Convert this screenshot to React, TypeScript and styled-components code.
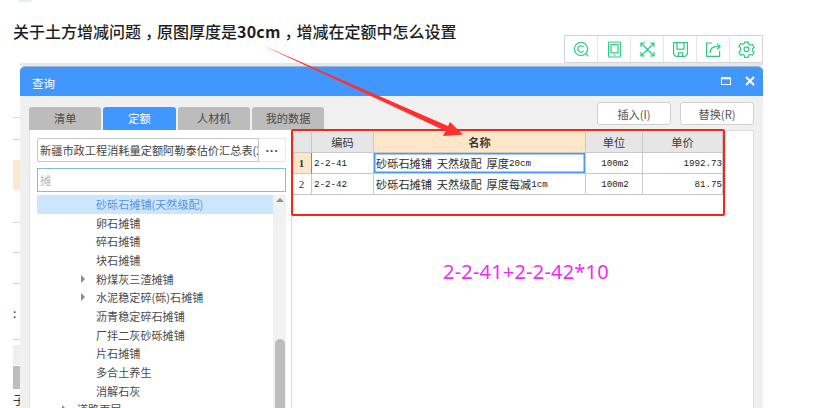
import React from "react";
import styled, { createGlobalStyle } from "styled-components";

const CJK = `"Noto Sans CJK SC", "Noto Sans", sans-serif`;

const Global = createGlobalStyle`
  html, body { margin: 0; padding: 0; background: #fff; }
  * { box-sizing: border-box; }
`;

const Page = styled.div`
  position: relative;
  width: 839px;
  height: 408px;
  overflow: hidden;
  background: #fff;
  font-family: ${CJK};
  color: #444;
`;

const TopArc = styled.div`
  width: 14px;
  height: 2px;
  margin-left: 18px;
  background: #e4eefa;
  border-radius: 0 0 7px 7px;
`;

const Heading = styled.h1`
  margin: 0;
  height: 33px;
  padding: 17px 0 0 13px;
  font-size: 16px;
  line-height: 24px;
  font-weight: 500;
  color: #1e1e1e;
  white-space: nowrap;
`;

const Comma = styled.span`
  display: inline-block;
  width: 16px;
  text-indent: 4px;
`;

const HeadingLatin = styled.span`
  letter-spacing: 0.2px;
  font-weight: 700;
`;

const ActionBar = styled.div`
  display: flex;
  width: 199px;
  height: 28px;
  margin-left: 564px;
  border: 1px solid #d4d4d4;
  background: #fff;
`;

const ActionCell = styled.div`
  flex: 1;
  display: flex;
  align-items: center;
  justify-content: center;
  color: #2fca83;
  & + & { border-left: 1px solid #e6e6e6; }
`;

const PaleStrip = styled.div`
  width: 743px;
  height: 3px;
  margin-left: 20px;
  background: #dce9f6;
`;

const Workspace = styled.div`
  display: flex;
  height: 342px;
`;

const Gutter = styled.div`
  width: 20px;
  padding-left: 13px;
  display: flex;
  flex-direction: column;
  overflow: hidden;
`;

const GutterLine = styled.div<{ $gap: number }>`
  height: 1px;
  margin-top: ${(p) => p.$gap}px;
  background: #d6d6d6;
  flex: none;
`;

const GutterBlock = styled.div<{ $gap: number; $h: number; $bg: string }>`
  height: ${(p) => p.$h}px;
  margin-top: ${(p) => p.$gap}px;
  background: ${(p) => p.$bg};
  flex: none;
`;

const GutterText = styled.div<{ $gap: number }>`
  margin-top: ${(p) => p.$gap}px;
  font-size: 12px;
  line-height: 16px;
  height: 16px;
  color: #333;
  flex: none;
  white-space: nowrap;
`;

const Dialog = styled.section`
  width: 743px;
  height: 342px;
  display: flex;
  flex-direction: column;
  background: #f0f0f0;
  border-radius: 5px 5px 0 0;
  border-top: 1px solid #a9b4bf;
  overflow: hidden;
`;

const TitleBar = styled.header`
  flex: none;
  height: 29px;
  display: flex;
  align-items: center;
  justify-content: space-between;
  padding: 0 8px 2px 12px;
  background: #4297fe;
  color: #fff;
  font-size: 11.5px;
`;

const TitleText = styled.span`
  padding-top: 4px;
`;

const WindowButtons = styled.div`
  display: flex;
  align-items: center;
  gap: 14px;
`;

const NavRow = styled.div`
  flex: none;
  height: 34px;
  display: flex;
  justify-content: space-between;
  padding: 0 9px;
`;

const Tabs = styled.div`
  display: flex;
  align-items: flex-end;
  gap: 2px;
`;

const Tab = styled.div<{ $active?: boolean }>`
  width: 72.3px;
  height: 23px;
  display: flex;
  align-items: center;
  justify-content: center;
  padding-bottom: 2px;
  border-radius: 3px 3px 0 0;
  font-size: 11.2px;
  background: ${(p) => (p.$active ? "#4297fe" : "#bcbcbc")};
  color: ${(p) => (p.$active ? "#fff" : "#4a4a4a")};
`;

const Buttons = styled.div`
  display: flex;
  gap: 9px;
  padding-top: 6px;
`;

const Button = styled.button`
  width: 74px;
  height: 23px;
  padding: 0;
  background: #fff;
  border: 1px solid #d0d0d0;
  border-radius: 3px;
  font-family: ${CJK};
  font-size: 11.2px;
  color: #555;
`;

const Content = styled.div`
  flex: 1;
  min-height: 0;
  display: flex;
  padding: 0 9px;
`;

const LeftPanel = styled.div`
  width: 262px;
  flex: none;
  background: #fff;
  padding: 8px 4px 0 7px;
  border-left: 1px solid #e2e2e2;
  overflow: hidden;
`;

const Picker = styled.div`
  display: flex;
  width: 249px;
  height: 24px;
`;

const PickerValue = styled.div`
  width: 222px;
  flex: none;
  border: 1px solid #c6c6c6;
  border-radius: 2px 0 0 2px;
  font-size: 11.2px;
  line-height: 22px;
  padding-left: 2px;
  color: #444;
  overflow: hidden;
  white-space: nowrap;
`;

const PickerMore = styled.div`
  flex: 1;
  display: flex;
  align-items: center;
  justify-content: center;
  border: 1px solid #e8e8e8;
  border-left: 0;
  font-family: "Liberation Sans", sans-serif;
  font-size: 13px;
  font-weight: 700;
  color: #555;
`;

const Search = styled.div`
  width: 249px;
  height: 24px;
  margin-top: 6px;
  border: 1px solid #85b9f6;
  font-size: 11.2px;
  line-height: 22px;
  padding-left: 2px;
  color: #b5b5b5;
`;

const ListArea = styled.div`
  display: flex;
  width: 249px;
  margin-top: 3px;
  height: 220px;
`;

const Tree = styled.ul`
  width: 236px;
  flex: none;
  margin: 0;
  padding: 0;
  list-style: none;
  overflow: hidden;
`;

const TreeRow = styled.li<{ $indent: number; $selected?: boolean }>`
  position: relative;
  height: 18.67px;
  line-height: 18.67px;
  padding-left: ${(p) => p.$indent}px;
  font-size: 11.1px;
  white-space: nowrap;
  background: ${(p) => (p.$selected ? "#cce6fe" : "transparent")};
  color: ${(p) => (p.$selected ? "#5a94e0" : "#4c4c4c")};
`;

const Caret = styled.span`
  position: absolute;
  top: 5px;
  margin-left: -15px;
  width: 0;
  height: 0;
  border-left: 4px solid #8a8a8a;
  border-top: 4px solid transparent;
  border-bottom: 4px solid transparent;
`;

const ScrollTrack = styled.div`
  width: 13px;
  flex: none;
  display: flex;
  flex-direction: column;
  align-items: center;
  justify-content: space-between;
  background: #f1f1f1;
  padding-top: 3px;
`;

const ScrollUp = styled.div`
  width: 0;
  height: 0;
  border-left: 4px solid transparent;
  border-right: 4px solid transparent;
  border-bottom: 4px solid #8f8f8f;
`;

const ScrollThumb = styled.div`
  width: 10px;
  height: 82px;
  margin-bottom: -6px;
  border-radius: 5px;
  background: #bdbdbd;
`;

const RightPanel = styled.div`
  flex: 1;
  background: #fff;
  border: 1px solid #dcdcdc;
  border-bottom: 0;
  padding-top: 1px;
`;

const Grid = styled.div`
  display: grid;
  grid-template-columns: 20px 62px 212px 57px 80px;
  grid-auto-rows: 21px;
  width: 431px;
`;

const HeadCell = styled.div<{ $hot?: boolean }>`
  display: flex;
  align-items: center;
  justify-content: center;
  background: ${(p) => (p.$hot ? "#fee6c9" : "#e6e6e6")};
  border-right: 1px solid #c9c9c9;
  border-bottom: 1px solid #c9c9c9;
  font-size: 11.2px;
  font-weight: ${(p) => (p.$hot ? 700 : 400)};
  color: #3a3a3a;
`;

const RowNum = styled.div<{ $current?: boolean }>`
  display: flex;
  align-items: center;
  justify-content: center;
  background: ${(p) => (p.$current ? "#fee6c9" : "#fff")};
  border-right: 1px solid ${(p) => (p.$current ? "#4297fe" : "#c9c9c9")};
  border-bottom: 1px solid #c9c9c9;
  font-family: "Liberation Serif", serif;
  font-size: 11px;
  font-weight: ${(p) => (p.$current ? 700 : 400)};
  color: #333;
`;

const Cell = styled.div<{ $align?: string; $focus?: boolean }>`
  display: flex;
  align-items: center;
  justify-content: ${(p) => p.$align || "flex-start"};
  padding: 0 0 0 2px;
  border-right: 1px solid #c9c9c9;
  border-bottom: 1px solid #c9c9c9;
  font-size: 11.2px;
  word-spacing: 2.4px;
  color: #2e2e2e;
  white-space: pre;
  ${(p) => (p.$focus ? "box-shadow: inset 0 0 0 1.5px #4a98f5;" : "")}
`;

const Mono = styled.span`
  font-family: "Liberation Mono", monospace;
  font-size: 9.2px;
  color: #222;
`;

const RedFrame = styled.div`
  position: absolute;
  left: 291px;
  top: 129px;
  width: 434px;
  height: 87px;
  border: 2.5px solid #fb2318;
  border-radius: 2px;
  pointer-events: none;
`;

const ArrowLayer = styled.svg`
  position: absolute;
  left: 0;
  top: 0;
  pointer-events: none;
`;

const Formula = styled.div`
  position: absolute;
  left: 443px;
  top: 258px;
  font-family: "Noto Sans", sans-serif;
  font-size: 20px;
  line-height: 28px;
  letter-spacing: 0.2px;
  color: #f02cf0;
  white-space: nowrap;
`;

const G = ({ children }: { children: React.ReactNode }) => (
  <svg width="17" height="17" viewBox="0 0 17 17" fill="none" stroke="currentColor" strokeWidth="1.2">
    {children}
  </svg>
);

const treeRows: { t: string; i: number; caret?: boolean; sel?: boolean }[] = [
  { t: "砂砾石摊铺(天然级配)", i: 59, sel: true },
  { t: "卵石摊铺", i: 59 },
  { t: "碎石摊铺", i: 59 },
  { t: "块石摊铺", i: 59 },
  { t: "粉煤灰三渣摊铺", i: 59, caret: true },
  { t: "水泥稳定碎(砾)石摊铺", i: 59, caret: true },
  { t: "沥青稳定碎石摊铺", i: 59 },
  { t: "厂拌二灰砂砾摊铺", i: 59 },
  { t: "片石摊铺", i: 59 },
  { t: "多合土养生", i: 59 },
  { t: "消解石灰", i: 59 },
  { t: "道路面层", i: 40, caret: true },
];

export default function App() {
  return (
    <Page>
      <Global />
      <TopArc />
      <Heading>
        关于土方增减问题<Comma>，</Comma>原图厚度是<HeadingLatin>30cm</HeadingLatin>
        <Comma>，</Comma>增减在定额中怎么设置
      </Heading>
      <ActionBar>
        <ActionCell>
          <G>
            <circle cx="8" cy="8" r="6.6" />
            <path d="M10.6 6.2A3.2 3.2 0 1 0 10.6 9.8M12.8 12.8l2.4 2.6" />
          </G>
        </ActionCell>
        <ActionCell>
          <G>
            <rect x="2.6" y="1" width="11.8" height="15" rx="0.8" />
            <rect x="5" y="3.4" width="7" height="8.4" />
            <path d="M7.5 14h2" />
          </G>
        </ActionCell>
        <ActionCell>
          <G>
            <path d="M2 2l13 13M15 2L2 15M2 6V2h4M11 2h4v4M2 11v4h4M15 11v4h-4" />
          </G>
        </ActionCell>
        <ActionCell>
          <G>
            <path d="M1.6 1.6h13.8v11.6l-2.2 2.2H3.8l-2.2-2.2z" />
            <rect x="5" y="1.6" width="7" height="6.6" />
            <path d="M6.3 15.4v-3.6h4.4v3.6" />
          </G>
        </ActionCell>
        <ActionCell>
          <G>
            <path d="M7 2H1.6v13.4h13V10" />
            <path d="M5 12c.3-4 3-6.6 7.2-6.6H15M12 2.6l3.2 2.8L12 8.2" />
          </G>
        </ActionCell>
        <ActionCell>
          <G>
            <path d="M6.8 1.4h3.4l.5 2.2 1.5.9 2.2-.7 1.7 2.9-1.7 1.6v1.6l1.7 1.6-1.7 2.9-2.2-.7-1.5.9-.5 2H6.8l-.5-2-1.5-.9-2.2.7-1.7-2.9 1.7-1.6V7.3L.9 5.7l1.7-2.9 2.2.7 1.5-.9z" transform="translate(0 -0.3)" />
            <circle cx="8.5" cy="8.2" r="2.4" />
          </G>
        </ActionCell>
      </ActionBar>
      <PaleStrip />
      <Workspace>
        <Gutter>
          <GutterLine $gap={51} />
          <GutterLine $gap={21} />
          <GutterBlock $gap={20} $h={30} $bg="#fde8d0" />
          <GutterLine $gap={32} />
          <GutterLine $gap={29} />
          <GutterLine $gap={30} />
          <GutterText $gap={21}>:</GutterText>
          <GutterLine $gap={18} />
          <GutterBlock $gap={5} $h={20} $bg="#efefef" />
          <GutterBlock $gap={1} $h={23} $bg="#bdbdbd" />
          <GutterText $gap={3}>子</GutterText>
        </Gutter>
        <Dialog>
          <TitleBar>
            <TitleText>查询</TitleText>
            <WindowButtons>
              <svg width="10" height="8" viewBox="0 0 10 8" fill="none" stroke="#fff">
                <rect x="0.5" y="1" width="9" height="6.5" strokeWidth="1" />
                <path d="M0 1.2h10" strokeWidth="2" />
              </svg>
              <svg width="10" height="10" viewBox="0 0 10 10" fill="none" stroke="#fff" strokeWidth="2">
                <path d="M1 1l8 8M9 1L1 9" />
              </svg>
            </WindowButtons>
          </TitleBar>
          <NavRow>
            <Tabs>
              <Tab>清单</Tab>
              <Tab $active>定额</Tab>
              <Tab>人材机</Tab>
              <Tab>我的数据</Tab>
            </Tabs>
            <Buttons>
              <Button>插入(I)</Button>
              <Button>替换(R)</Button>
            </Buttons>
          </NavRow>
          <Content>
            <LeftPanel>
              <Picker>
                <PickerValue>新疆市政工程消耗量定额阿勒泰估价汇总表(2</PickerValue>
                <PickerMore>···</PickerMore>
              </Picker>
              <Search>摊</Search>
              <ListArea>
                <Tree>
                  {treeRows.map((r) => (
                    <TreeRow key={r.t} $indent={r.i} $selected={r.sel}>
                      {r.caret && <Caret />}
                      {r.t}
                    </TreeRow>
                  ))}
                </Tree>
                <ScrollTrack>
                  <ScrollUp />
                  <ScrollThumb />
                </ScrollTrack>
              </ListArea>
            </LeftPanel>
            <RightPanel>
              <Grid>
                <HeadCell />
                <HeadCell>编码</HeadCell>
                <HeadCell $hot>名称</HeadCell>
                <HeadCell>单位</HeadCell>
                <HeadCell>单价</HeadCell>
                <RowNum $current>1</RowNum>
                <Cell><Mono>2-2-41</Mono></Cell>
                <Cell $focus>砂砾石摊铺 天然级配 厚度<Mono>20cm</Mono></Cell>
                <Cell $align="center"><Mono>100m2</Mono></Cell>
                <Cell $align="flex-end"><Mono>1992.73</Mono></Cell>
                <RowNum>2</RowNum>
                <Cell><Mono>2-2-42</Mono></Cell>
                <Cell>砂砾石摊铺 天然级配 厚度每减<Mono>1cm</Mono></Cell>
                <Cell $align="center"><Mono>100m2</Mono></Cell>
                <Cell $align="flex-end"><Mono>81.75</Mono></Cell>
              </Grid>
            </RightPanel>
          </Content>
        </Dialog>
      </Workspace>
      <RedFrame />
      <ArrowLayer width="839" height="408" viewBox="0 0 839 408">
        <polygon points="262,45 448,126 450,122 463,134.5 443,136 445.5,131" fill="#ff2f2f" />
      </ArrowLayer>
      <Formula>2-2-41+2-2-42*10</Formula>
    </Page>
  );
}
